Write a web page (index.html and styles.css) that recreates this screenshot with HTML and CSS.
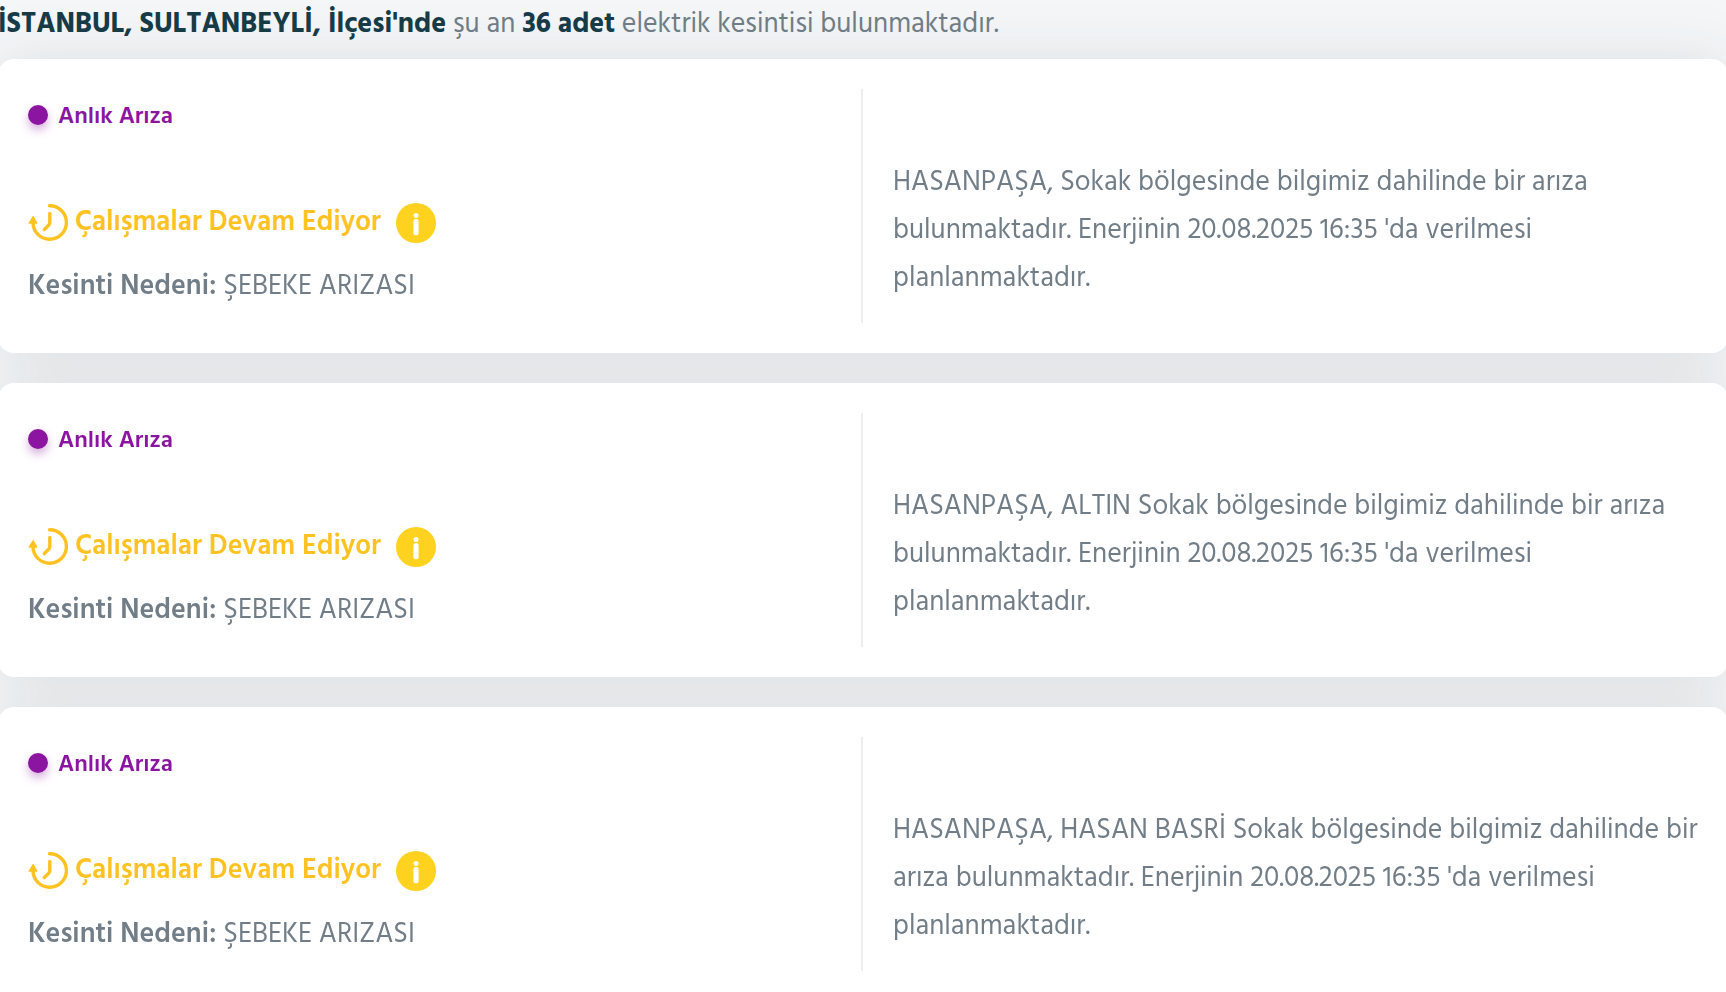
FILE: index.html
```
<!DOCTYPE html>
<html lang="tr">
<head>
  <meta charset="UTF-8">
  <meta name="viewport" content="width=device-width, initial-scale=1">
  <title>Elektrik Kesintileri</title>
  <link rel="stylesheet" href="styles.css">
</head>
<body>
  <svg class="symbols" aria-hidden="true">
    <symbol id="icon-clock" viewBox="0 0 40 40">
      <path d="M21.5 2.8A16.7 16.7 0 1 1 5 19.5V17" fill="none" stroke="currentColor" stroke-width="3.4" stroke-linecap="round"/>
      <path d="M5.2 12.6L0.6 19.8Q0.3 20.8 1.4 20.8H8.7Q9.8 20.8 9.3 19.8Z" fill="currentColor"/>
      <path d="M21.8 10.5V19.6Q21.8 21 20.8 22L16.3 26.6" fill="none" stroke="currentColor" stroke-width="3.4" stroke-linecap="round" stroke-linejoin="round"/>
    </symbol>
    <symbol id="icon-info" viewBox="0 0 40 40">
      <circle cx="20" cy="20" r="20" fill="#ffd21f"/>
      <circle cx="20" cy="12.4" r="2.5" fill="#fff"/>
      <path d="M20 18.7V29.7" stroke="#fff" stroke-width="5.2" stroke-linecap="round"/>
    </symbol>
  </svg>

  <main class="outages">
    <p class="summary"><strong>İSTANBUL, SULTANBEYLİ, İlçesi'nde</strong> şu an <strong>36 adet</strong> elektrik kesintisi bulunmaktadır.</p>

    <div class="card-list">
      <article class="card">
        <div class="card-info">
          <div class="type">Anlık Arıza</div>
          <div class="status">
            <svg class="icon"><use href="#icon-clock"/></svg>
            <span class="status-text">Çalışmalar Devam Ediyor</span>
            <button class="info-button" type="button" aria-label="Bilgi"><svg class="icon"><use href="#icon-info"/></svg></button>
          </div>
          <p class="reason"><strong>Kesinti Nedeni:</strong> ŞEBEKE ARIZASI</p>
        </div>
        <p class="description">HASANPAŞA, Sokak bölgesinde bilgimiz dahilinde bir arıza bulunmaktadır. Enerjinin 20.08.2025 16:35 'da verilmesi planlanmaktadır.</p>
      </article>

      <article class="card">
        <div class="card-info">
          <div class="type">Anlık Arıza</div>
          <div class="status">
            <svg class="icon"><use href="#icon-clock"/></svg>
            <span class="status-text">Çalışmalar Devam Ediyor</span>
            <button class="info-button" type="button" aria-label="Bilgi"><svg class="icon"><use href="#icon-info"/></svg></button>
          </div>
          <p class="reason"><strong>Kesinti Nedeni:</strong> ŞEBEKE ARIZASI</p>
        </div>
        <p class="description">HASANPAŞA, ALTIN Sokak bölgesinde bilgimiz dahilinde bir arıza bulunmaktadır. Enerjinin 20.08.2025 16:35 'da verilmesi planlanmaktadır.</p>
      </article>

      <article class="card">
        <div class="card-info">
          <div class="type">Anlık Arıza</div>
          <div class="status">
            <svg class="icon"><use href="#icon-clock"/></svg>
            <span class="status-text">Çalışmalar Devam Ediyor</span>
            <button class="info-button" type="button" aria-label="Bilgi"><svg class="icon"><use href="#icon-info"/></svg></button>
          </div>
          <p class="reason"><strong>Kesinti Nedeni:</strong> ŞEBEKE ARIZASI</p>
        </div>
        <p class="description">HASANPAŞA, HASAN BASRİ Sokak bölgesinde bilgimiz dahilinde bir arıza bulunmaktadır. Enerjinin 20.08.2025 16:35 'da verilmesi planlanmaktadır.</p>
      </article>
    </div>
  </main>
</body>
</html>
```
FILE: styles.css
```
* {
  box-sizing: border-box;
}

body {
  margin: 0;
  overflow-x: hidden;
  background: #f4f6f8;
  font-family: Hind, 'Noto Sans', sans-serif;
  font-size: 28px;
  color: #727e87;
}

p {
  margin: 0;
}

strong {
  font-weight: 600;
}

.symbols {
  display: none;
}

.outages {
  margin: 0 -2px;
}

.summary {
  padding-bottom: 9px;
  line-height: 50px;
}

.summary strong {
  font-weight: 700;
  color: #173c48;
}

/* one shadow for the whole list, so it never falls on a neighbouring card */
.card-list {
  display: flex;
  flex-direction: column;
  gap: 30px;
  filter: drop-shadow(0 2px 30px rgba(30, 32, 36, 0.11));
}

.card {
  display: grid;
  grid-template-columns: 1fr 1fr;
  padding: 30px;
  border-radius: 16px;
  background: #fff;
}

.card-info {
  min-height: 234px;
  padding-top: 8px;
  border-right: 2px solid #eee;
}

.type {
  display: flex;
  align-items: center;
  gap: 10px;
  line-height: 40px;
  font-size: 24px;
  font-weight: 600;
  color: #8b14a0;
}

.type::before {
  content: '';
  width: 20px;
  height: 20px;
  margin-bottom: 4px;
  border-radius: 50%;
  background: #8b14a0;
  box-shadow: 0 5px 10px rgba(139, 20, 160, 0.35);
}

.status {
  display: flex;
  align-items: center;
  margin-top: 66px;
  color: #ffc222;
}

.status-text {
  margin: 0 15px 0 7px;
  line-height: 40px;
  font-weight: 600;
}

.icon {
  display: block;
  width: 40px;
  height: 40px;
}

.info-button {
  padding: 0;
  border: none;
  border-radius: 50%;
  background: none;
  cursor: pointer;
}

.reason {
  margin-top: 20px;
  line-height: 48px;
}

.description {
  align-self: center;
  padding: 50px 0 0 30px;
  line-height: 48px;
}

@media (max-width: 900px) {
  .card {
    grid-template-columns: 1fr;
  }

  .card-info {
    border-right: none;
  }

  .description {
    padding: 0;
  }
}
```
